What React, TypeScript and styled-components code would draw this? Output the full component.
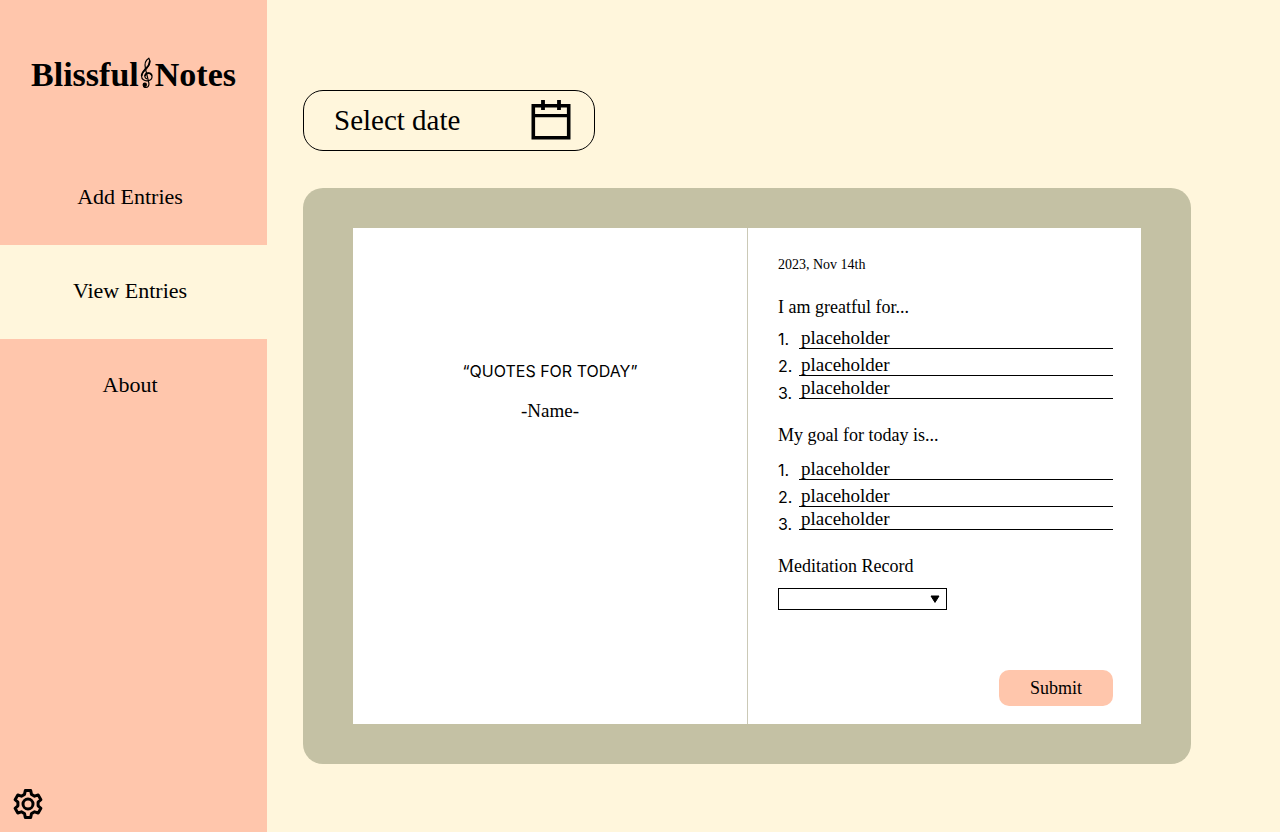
import React from "react";
import styled, { createGlobalStyle } from "styled-components";

const peach = "#ffc6ac";
const cream = "#fff6dc";
const sage = "#c4c1a4";
const serif = `"Liberation Serif", serif`;
const sans = `Inter, sans-serif`;

const GlobalStyle = createGlobalStyle`
  *, *::before, *::after { box-sizing: border-box; }
  body { margin: 0; background: ${cream}; color: #000; font-family: ${serif}; }
  h1, h2, p, ol, ul { margin: 0; padding: 0; }
  ol, ul { list-style: none; }
  button, input, select { font-family: inherit; color: inherit; }
`;

const Layout = styled.div`
  display: flex;
  min-height: 100vh;
`;

const Sidebar = styled.aside`
  flex: 0 0 267px;
  display: flex;
  flex-direction: column;
  background: ${peach};
`;

const Logo = styled.h1`
  display: flex;
  align-items: center;
  justify-content: center;
  height: 151px;
  padding-bottom: 2px;
  font-size: 34px;
  line-height: 40px;
  font-weight: 700;
`;

const ClefIcon = styled.svg`
  flex: none;
  width: 16px;
  height: 32px;
  margin-bottom: 4px;
`;

const NavLink = styled.a<{ $active?: boolean }>`
  display: flex;
  align-items: center;
  justify-content: center;
  height: 94px;
  padding: 0 7px 2px 0;
  background: ${(p) => (p.$active ? cream : "transparent")};
  color: inherit;
  font-size: 22px;
  line-height: 28px;
  text-decoration: none;
`;

const SettingsButton = styled.button`
  display: flex;
  align-self: flex-start;
  margin: auto 0 12px 12px;
  padding: 0;
  border: 0;
  background: none;
`;

const GearIcon = styled.svg`
  width: 32px;
  height: 32px;
`;

const Main = styled.main`
  flex: 1;
  min-width: 0;
  display: flex;
  flex-direction: column;
  align-items: flex-start;
  gap: 37px;
  padding: 90px 89px 68px 36px;
`;

const DateButton = styled.button`
  display: flex;
  align-items: center;
  justify-content: space-between;
  width: 292px;
  height: 61px;
  padding: 0 23px 1px 30px;
  border: 1px solid #000;
  border-radius: 20px;
  background: transparent;
  font-size: 29px;
  line-height: 36px;
`;

const CalendarIcon = styled.svg`
  width: 40px;
  height: 40px;
`;

const Board = styled.section`
  display: grid;
  grid-template-columns: 1fr 1fr;
  align-self: stretch;
  flex: 1;
  padding: 40px 50px;
  border-radius: 20px;
  background: ${sage};
`;

const Page = styled.div`
  min-width: 0;
  display: flex;
  flex-direction: column;
  background: #fff;
`;

const QuotePage = styled(Page)`
  align-items: center;
  gap: 16px;
  padding-top: 131px;
`;

const Quote = styled.p`
  font: 400 16px/24px ${sans};
`;

const Author = styled.p`
  font-size: 19px;
  line-height: 24px;
`;

const EntryPage = styled(Page).attrs({ as: "form" })`
  padding: 27px 28px 18px 30px;
  border-left: 1px solid #cbc9b6;
`;

const EntryDate = styled.p`
  font-size: 14px;
  line-height: 20px;
`;

const Heading = styled.h2`
  margin-top: 22px;
  font-size: 18px;
  line-height: 20px;
  font-weight: 500;
`;

const List = styled.ol<{ $gap: number }>`
  margin-top: ${(p) => p.$gap}px;
`;

const Row = styled.li`
  display: flex;
  align-items: flex-start;
  height: 27px;

  &:last-child input {
    height: 23px;
    padding-top: 1px;
  }
`;

const Number = styled.label`
  flex: 0 0 21px;
  padding-top: 7px;
  font: 400 16px/20px ${sans};
`;

const LineInput = styled.input`
  flex: 1;
  min-width: 0;
  height: 27px;
  padding: 6px 2px 0;
  border: 0;
  border-bottom: 1px solid #000;
  border-radius: 0;
  background: transparent;
  font-size: 19px;
  line-height: 20px;

  &::placeholder { color: #000; opacity: 1; }
`;

const SelectBox = styled.div`
  display: grid;
  align-items: center;
  width: 169px;
  margin-top: 12px;

  > * { grid-area: 1 / 1; }
`;

const Select = styled.select`
  width: 100%;
  height: 22px;
  border: 1px solid #000;
  border-radius: 0;
  background: #fff;
  appearance: none;
`;

const Arrow = styled.svg`
  justify-self: end;
  width: 10px;
  height: 8px;
  margin-right: 7px;
  pointer-events: none;
`;

const Submit = styled.button`
  align-self: flex-end;
  width: 114px;
  height: 36px;
  margin-top: auto;
  border: 0;
  border-radius: 10px;
  background: ${peach};
  font-size: 18px;
  line-height: 24px;
`;

function Clef() {
  return (
    <ClefIcon viewBox="0 0 16 32" fill="none" stroke="#000" strokeLinecap="round" aria-hidden="true">
      <path d="M6.5 12C5.4 7.5 6.6 3 9.8 1.2C11.8 4.2 10.8 8.6 7.5 11.6C4.5 14.2 2.6 16.2 2.6 19.2C2.6 22.4 5.4 24.2 8.6 23.8C11.5 23.5 13.2 21.8 13 19.4C12.8 17.2 11 15.8 9 16C6.8 16.2 5.4 18 5.9 19.8C6.2 20.8 6.9 21.5 7.8 21.8" strokeWidth="1.2" />
      <path d="M10.8 4.2C10.6 7 9.3 9.2 7.2 11.4C4.8 13.8 3 15.6 2.7 18.4" strokeWidth="1.8" />
      <path d="M12.6 18C11.6 15.6 7.2 15.4 6.2 18.4" strokeWidth="1.7" />
      <path d="M6.4 11.6L9.9 26.2C10.3 28.8 8.8 30.4 6.8 30.4C5.4 30.4 4.5 29.6 4.4 28.4" strokeWidth="1.2" />
      <circle cx="5.8" cy="27.8" r="2.2" fill="#000" stroke="none" />
    </ClefIcon>
  );
}

function Gear() {
  return (
    <GearIcon viewBox="-16 -16 32 32" fill="none" stroke="#000" strokeWidth="3" strokeLinejoin="round" aria-hidden="true">
      <path d="M-2.7-13.4H2.7L3.5-9.6L6.6-7.8L10.2-9L12.9-4.3L10.1-1.8V1.8L12.9 4.3L10.2 9L6.6 7.8L3.5 9.6L2.7 13.4H-2.7L-3.5 9.6L-6.6 7.8L-10.2 9L-12.9 4.3L-10.1 1.8V-1.8L-12.9-4.3L-10.2-9L-6.6-7.8L-3.5-9.6Z" />
      <circle r="5" />
    </GearIcon>
  );
}

function EntryList({ name, gap }: { name: string; gap: number }) {
  return (
    <List $gap={gap}>
      {[1, 2, 3].map((n) => (
        <Row key={n}>
          <Number htmlFor={`${name}-${n}`}>{n}.</Number>
          <LineInput id={`${name}-${n}`} type="text" placeholder="placeholder" />
        </Row>
      ))}
    </List>
  );
}

export default function App() {
  return (
    <Layout>
      <GlobalStyle />
      <Sidebar>
        <Logo>
          <span>Blissful</span>
          <Clef />
          <span>Notes</span>
        </Logo>
        <nav>
          <NavLink href="#add">Add Entries</NavLink>
          <NavLink href="#view" $active aria-current="page">View Entries</NavLink>
          <NavLink href="#about">About</NavLink>
        </nav>
        <SettingsButton type="button" aria-label="Settings">
          <Gear />
        </SettingsButton>
      </Sidebar>
      <Main>
        <DateButton type="button">
          <span>Select date</span>
          <CalendarIcon viewBox="0 0 40 40" fill="none" stroke="#000" aria-hidden="true">
            <path d="M2.3 5.8H37.7V37.7H2.3Z" strokeWidth="3.6" />
            <path d="M2 15.7H38" strokeWidth="3.2" />
            <path d="M12 0V10M28 0V10" strokeWidth="3.8" />
          </CalendarIcon>
        </DateButton>
        <Board>
          <QuotePage>
            <Quote>“QUOTES FOR TODAY”</Quote>
            <Author>-Name-</Author>
          </QuotePage>
          <EntryPage>
            <EntryDate>2023, Nov 14th</EntryDate>
            <Heading>I am greatful for...</Heading>
            <EntryList name="grateful" gap={5} />
            <Heading>My goal for today is...</Heading>
            <EntryList name="goal" gap={8} />
            <Heading>
              <label htmlFor="meditation">Meditation Record</label>
            </Heading>
            <SelectBox>
              <Select id="meditation" defaultValue="">
                <option value="" />
              </Select>
              <Arrow viewBox="0 0 10 8" aria-hidden="true">
                <path d="M1 1H9L5 7.4Z" stroke="#000" strokeLinejoin="round" />
              </Arrow>
            </SelectBox>
            <Submit type="button">Submit</Submit>
          </EntryPage>
        </Board>
      </Main>
    </Layout>
  );
}
